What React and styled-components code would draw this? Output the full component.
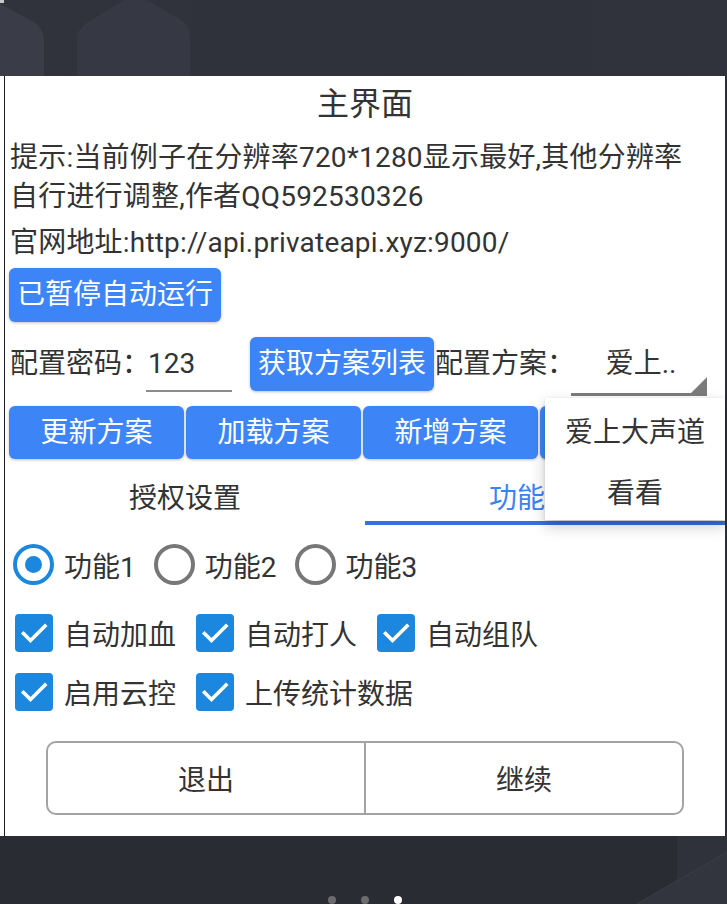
import styled, { createGlobalStyle } from "styled-components";

// 배경/패널 색은 스크린샷에서 대충 뽑은 값
const GlobalStyle = createGlobalStyle`
  html, body {
    margin: 0;
    padding: 0;
    background: #2c2f37;
  }
  body {
    font-family: Roboto, "Noto Sans CJK SC", sans-serif;
  }
`;

const Screen = styled.div`
  width: 727px;
  height: 904px;
  overflow: hidden;
  display: flex;
  flex-direction: column;
  background: #2b2e36;
`;

const TopBg = styled.div`
  position: relative;
  height: 76px;
  flex-shrink: 0;
  background: linear-gradient(90deg, #30333c, #2f323b 60%, #30333c);
`;

const Deco = styled.svg`
  position: absolute;
  left: 0;
  top: 0;
`;

const Panel = styled.div`
  position: relative;
  width: 725px;
  height: 760px;
  flex-shrink: 0;
  box-sizing: border-box;
  padding-left: 9px;
  background: linear-gradient(90deg, #fff 0 4px, #1c1d24 4px 5px, #fff 5px);
  color: #333;
  font-size: 28px;
`;

const Title = styled.div`
  height: 56px;
  line-height: 56px;
  margin-left: -4px;
  text-align: center;
  font-size: 32px;
`;

const Text = styled.div`
  margin-top: ${(props) => props.mt}px;
  line-height: 39px;
  white-space: nowrap;
  padding-left: 1px;
  letter-spacing: 0.2px;
`;

const BlueBtn = styled.button`
  display: block;
  box-sizing: border-box;
  height: ${(props) => props.h || 54}px;
  width: ${(props) => (props.w ? props.w + "px" : "auto")};
  margin: ${(props) => props.m || "0"};
  padding: 0 8px;
  border: none;
  border-radius: 6px;
  background: #3d85f7;
  color: #fff;
  font-family: inherit;
  font-size: 28px;
  line-height: 1;
  white-space: nowrap;
  box-shadow: 0 1px 3px rgba(0, 0, 0, 0.25);
`;

const ConfigRow = styled.div`
  display: flex;
  align-items: flex-start;
  height: 54px;
  margin-top: 15px;
`;

const Label = styled.div`
  line-height: 54px;
  white-space: nowrap;
  padding-left: 1px;
`;

const Input = styled.div`
  box-sizing: border-box;
  width: 86px;
  height: 55px;
  margin-left: -4px;
  padding-left: 2px;
  line-height: 53px;
  border-bottom: 2px solid #8c8c8c;
`;

const Spinner = styled.div`
  position: relative;
  width: 136px;
  height: 59px;
  margin-left: -4px;
  line-height: 54px;
  text-align: center;
  padding-left: 4px;
  box-sizing: border-box;

  &::after {
    content: "";
    position: absolute;
    left: 0;
    right: 0;
    bottom: 0;
    height: 3px;
    background: #7c7c7c;
  }
  &::before {
    content: "";
    position: absolute;
    right: 0;
    bottom: 0;
    width: 19px;
    height: 19px;
    background: #7c7c7c;
    clip-path: polygon(100% 0, 100% 100%, 0 100%);
  }
`;

const BtnRow = styled.div`
  display: flex;
  gap: 2px;
  margin-top: 15px;
`;

const TabBar = styled.div`
  display: flex;
  margin-top: 18px;
  margin-left: -4px;
`;

const Tab = styled.div`
  flex: 1;
  height: 44px;
  line-height: 44px;
  text-align: center;
  color: ${(props) => (props.active ? "#3b83f3" : "#333")};
  border-bottom: 4px solid ${(props) => (props.active ? "#3174de" : "transparent")};
`;

const RadioRow = styled.div`
  display: flex;
  align-items: center;
  height: 41px;
  margin-top: 19px;
  padding-left: 4px;
`;

const RadioItem = styled.div`
  display: flex;
  align-items: center;
  gap: 10px;
  margin-left: ${(props) => (props.first ? 0 : 18)}px;
`;

const RadioCircle = styled.div`
  box-sizing: border-box;
  width: 41px;
  height: 41px;
  border-radius: 50%;
  border: 4px solid ${(props) => (props.on ? "#1b87de" : "#777")};
  display: flex;
  align-items: center;
  justify-content: center;

  &::after {
    content: "";
    display: ${(props) => (props.on ? "block" : "none")};
    width: 17px;
    height: 17px;
    border-radius: 50%;
    background: #1b87de;
  }
`;

const CheckRow = styled.div`
  display: flex;
  align-items: center;
  height: 38px;
  margin-top: ${(props) => props.mt}px;
  padding-left: 6px;
`;

const CheckItem = styled.div`
  display: flex;
  align-items: center;
  gap: 11px;
  margin-left: ${(props) => (props.first ? 0 : 20)}px;
  white-space: nowrap;
`;

const CheckBox = styled.div`
  width: 38px;
  height: 38px;
  border-radius: 4px;
  background: #1b87de;
  display: flex;
  align-items: center;
  justify-content: center;
`;

const BottomGroup = styled.div`
  display: flex;
  box-sizing: border-box;
  width: 638px;
  height: 74px;
  margin: 30px 0 0 37px;
  border: 2px solid #a3a3a3;
  border-radius: 10px;
  overflow: hidden;
`;

const GroupBtn = styled.div`
  flex: 1;
  display: flex;
  align-items: center;
  justify-content: center;
  border-left: ${(props) => (props.divider ? "2px solid #a3a3a3" : "none")};
`;

const Popup = styled.div`
  position: absolute;
  left: 545px;
  top: 322px;
  width: 180px;
  height: 122px;
  box-sizing: border-box;
  padding-top: 4px;
  background: #fff;
  box-shadow: 0 6px 14px rgba(0, 0, 0, 0.22), 0 1px 3px rgba(0, 0, 0, 0.12);
  z-index: 2;
`;

const PopupItem = styled.div`
  height: 61px;
  line-height: 61px;
  text-align: center;
  white-space: nowrap;
`;

const BottomBg = styled.div`
  position: relative;
  flex: 1;
  background: #2a2c34;
`;

const Dots = styled.div`
  display: flex;
  justify-content: center;
  gap: 25px;
  padding: 60px 0 0 3px;
`;

const Dot = styled.div`
  width: 8px;
  height: 8px;
  border-radius: 50%;
  background: ${(props) => (props.on ? "#fff" : "#6c6c6c")};
`;

function Check() {
  return (
    <svg width="38" height="38" viewBox="0 0 38 38">
      <polyline
        points="8.5,19.5 15.5,26.5 30,12"
        fill="none"
        stroke="#fff"
        strokeWidth="3.6"
        strokeLinecap="square"
      />
    </svg>
  );
}

export default function App() {
  let radios = ["功能1", "功能2", "功能3"];
  let checks1 = ["自动加血", "自动打人", "自动组队"];
  let checks2 = ["启用云控", "上传统计数据"];

  return (
    <Screen>
      <GlobalStyle />
      <TopBg>
        <Deco width="727" height="76" viewBox="0 0 727 76">
          <path d="M0 4 L32 21 Q44 28 44 41 L44 76 L0 76 Z" fill="#3a3d47" />
          <path
            d="M77 76 L77 40 Q77 28 88 22 L124 0 L147 0 L180 19 Q190 25 190 37 L190 76 Z"
            fill="#363944"
          />
          <rect x="0" y="0" width="4" height="3" fill="#c8c9cc" />
        </Deco>
      </TopBg>

      <Panel>
        <Title>主界面</Title>
        <Text mt={6}>
          提示:当前例子在分辨率720*1280显示最好,其他分辨率
          <br />
          自行进行调整,作者QQ592530326
        </Text>
        <Text mt={7}>官网地址:http://api.privateapi.xyz:9000/</Text>
        <BlueBtn w={212} m="6px 0 0 0">
          已暂停自动运行
        </BlueBtn>

        <ConfigRow>
          <Label>配置密码：</Label>
          <Input>123</Input>
          <BlueBtn w={184} m="0 0 0 18px">
            获取方案列表
          </BlueBtn>
          <Label>配置方案：</Label>
          <Spinner>爱上..</Spinner>
        </ConfigRow>

        {/* 네번째 버튼은 드롭다운에 가려져서 글자 안보임 */}
        <BtnRow>
          <BlueBtn w={175} h={53}>更新方案</BlueBtn>
          <BlueBtn w={175} h={53}>加载方案</BlueBtn>
          <BlueBtn w={175} h={53}>新增方案</BlueBtn>
          <BlueBtn w={175} h={53} />
        </BtnRow>

        <TabBar>
          <Tab>授权设置</Tab>
          <Tab active>功能设置</Tab>
        </TabBar>

        <RadioRow>
          {radios.map((r, i) => (
            <RadioItem key={r} first={i == 0}>
              <RadioCircle on={i == 0} />
              <span>{r}</span>
            </RadioItem>
          ))}
        </RadioRow>

        <CheckRow mt={29}>
          {checks1.map((c, i) => (
            <CheckItem key={c} first={i == 0}>
              <CheckBox>
                <Check />
              </CheckBox>
              <span>{c}</span>
            </CheckItem>
          ))}
        </CheckRow>
        <CheckRow mt={21}>
          {checks2.map((c, i) => (
            <CheckItem key={c} first={i == 0}>
              <CheckBox>
                <Check />
              </CheckBox>
              <span>{c}</span>
            </CheckItem>
          ))}
        </CheckRow>

        <BottomGroup>
          <GroupBtn>退出</GroupBtn>
          <GroupBtn divider>继续</GroupBtn>
        </BottomGroup>

        <Popup>
          <PopupItem>爱上大声道</PopupItem>
          <PopupItem>看看</PopupItem>
        </Popup>
      </Panel>

      <BottomBg>
        <Deco width="727" height="68" viewBox="0 0 727 68">
          <rect x="677" y="0" width="50" height="68" fill="#30323b" />
          <path d="M637 68 L727 16 L727 68 Z" fill="#33353e" />
          <line x1="637" y1="68" x2="727" y2="16" stroke="#3b3e48" strokeWidth="1" />
        </Deco>
        <Dots>
          <Dot />
          <Dot />
          <Dot on />
        </Dots>
      </BottomBg>
    </Screen>
  );
}
